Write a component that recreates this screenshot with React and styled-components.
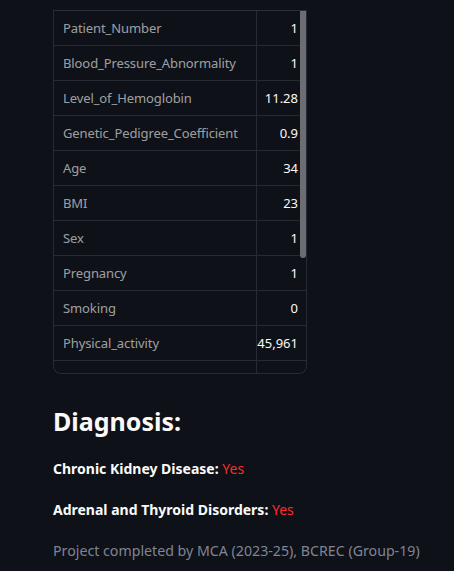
import React from 'react'
import styled, { createGlobalStyle } from 'styled-components'

const Global = createGlobalStyle`
  html, body {
    margin: 0;
    padding: 0;
    background: #0e1117;
  }
  body {
    font-family: "Noto Sans", "Liberation Sans", sans-serif;
    color: #fafafa;
  }
`

const rows = [
  ['Patient_Number', '1'],
  ['Blood_Pressure_Abnormality', '1'],
  ['Level_of_Hemoglobin', '11.28'],
  ['Genetic_Pedigree_Coefficient', '0.9'],
  ['Age', '34'],
  ['BMI', '23'],
  ['Sex', '1'],
  ['Pregnancy', '1'],
  ['Smoking', '0'],
  ['Physical_activity', '45,961'],
  ['', ''],
]

function App() {
  return (
    <Page>
      <Global />
      <TableWrap>
        <Table>
          {rows.map(([k, v], i) => (
            <Row key={i}>
              <Label>{k}</Label>
              <Value>{v}</Value>
            </Row>
          ))}
        </Table>
        <Thumb />
      </TableWrap>

      <Heading>Diagnosis:</Heading>
      <Result>Chronic Kidney Disease: <Red>Yes</Red></Result>
      <Result>Adrenal and Thyroid Disorders: <Red>Yes</Red></Result>
      <Footer>Project completed by MCA (2023-25), BCREC (Group-19)</Footer>
    </Page>
  )
}

const Page = styled.div`
  width: 454px;
  height: 571px;
  padding: 10px 53px 0;
  box-sizing: border-box;
  overflow: hidden;
`

const TableWrap = styled.div`
  position: relative;
  width: 254px;
  height: 364px;
  border: 1px solid #262a33;
  border-top-color: #2c2f37;
  border-radius: 0 0 8px 8px;
  box-sizing: border-box;
  overflow: hidden;
`

const Table = styled.div`
  display: flex;
  flex-direction: column;
`

const Row = styled.div`
  display: grid;
  grid-template-columns: 203px 49px;
  height: 35px;
  border-bottom: 1px solid #262a33;
  box-sizing: border-box;
`

const Label = styled.div`
  display: flex;
  align-items: center;
  padding: 0 9px;
  font-size: 13px;
  letter-spacing: -0.1px;
  color: rgba(250, 250, 250, 0.62);
  border-right: 1px solid #262a33;
  white-space: nowrap;
`

const Value = styled.div`
  display: flex;
  align-items: center;
  justify-content: flex-end;
  padding-right: 8px;
  font-size: 13px;
  color: #fafafa;
`

const Thumb = styled.div`
  position: absolute;
  right: 0;
  top: 0;
  width: 6px;
  height: 247px;
  background: #6b6d72;
  border-radius: 0 0 3px 3px;
`

const Heading = styled.h2`
  margin: 27px 0 0;
  font-size: 25px;
  font-weight: 700;
  line-height: 40px;
  color: #fafafa;
`

const Result = styled.p`
  margin: 16px 0 0;
  font-size: 14px;
  font-weight: 700;
  line-height: 24px;
  color: #fafafa;
  & + & {
    margin-top: 17px;
  }
`

const Red = styled.span`
  color: #ff2b2b;
  font-weight: 400;
`

const Footer = styled.p`
  margin: 17px 0 0;
  font-size: 14.2px;
  line-height: 24px;
  color: #808495;
  white-space: nowrap;
`

export default App
